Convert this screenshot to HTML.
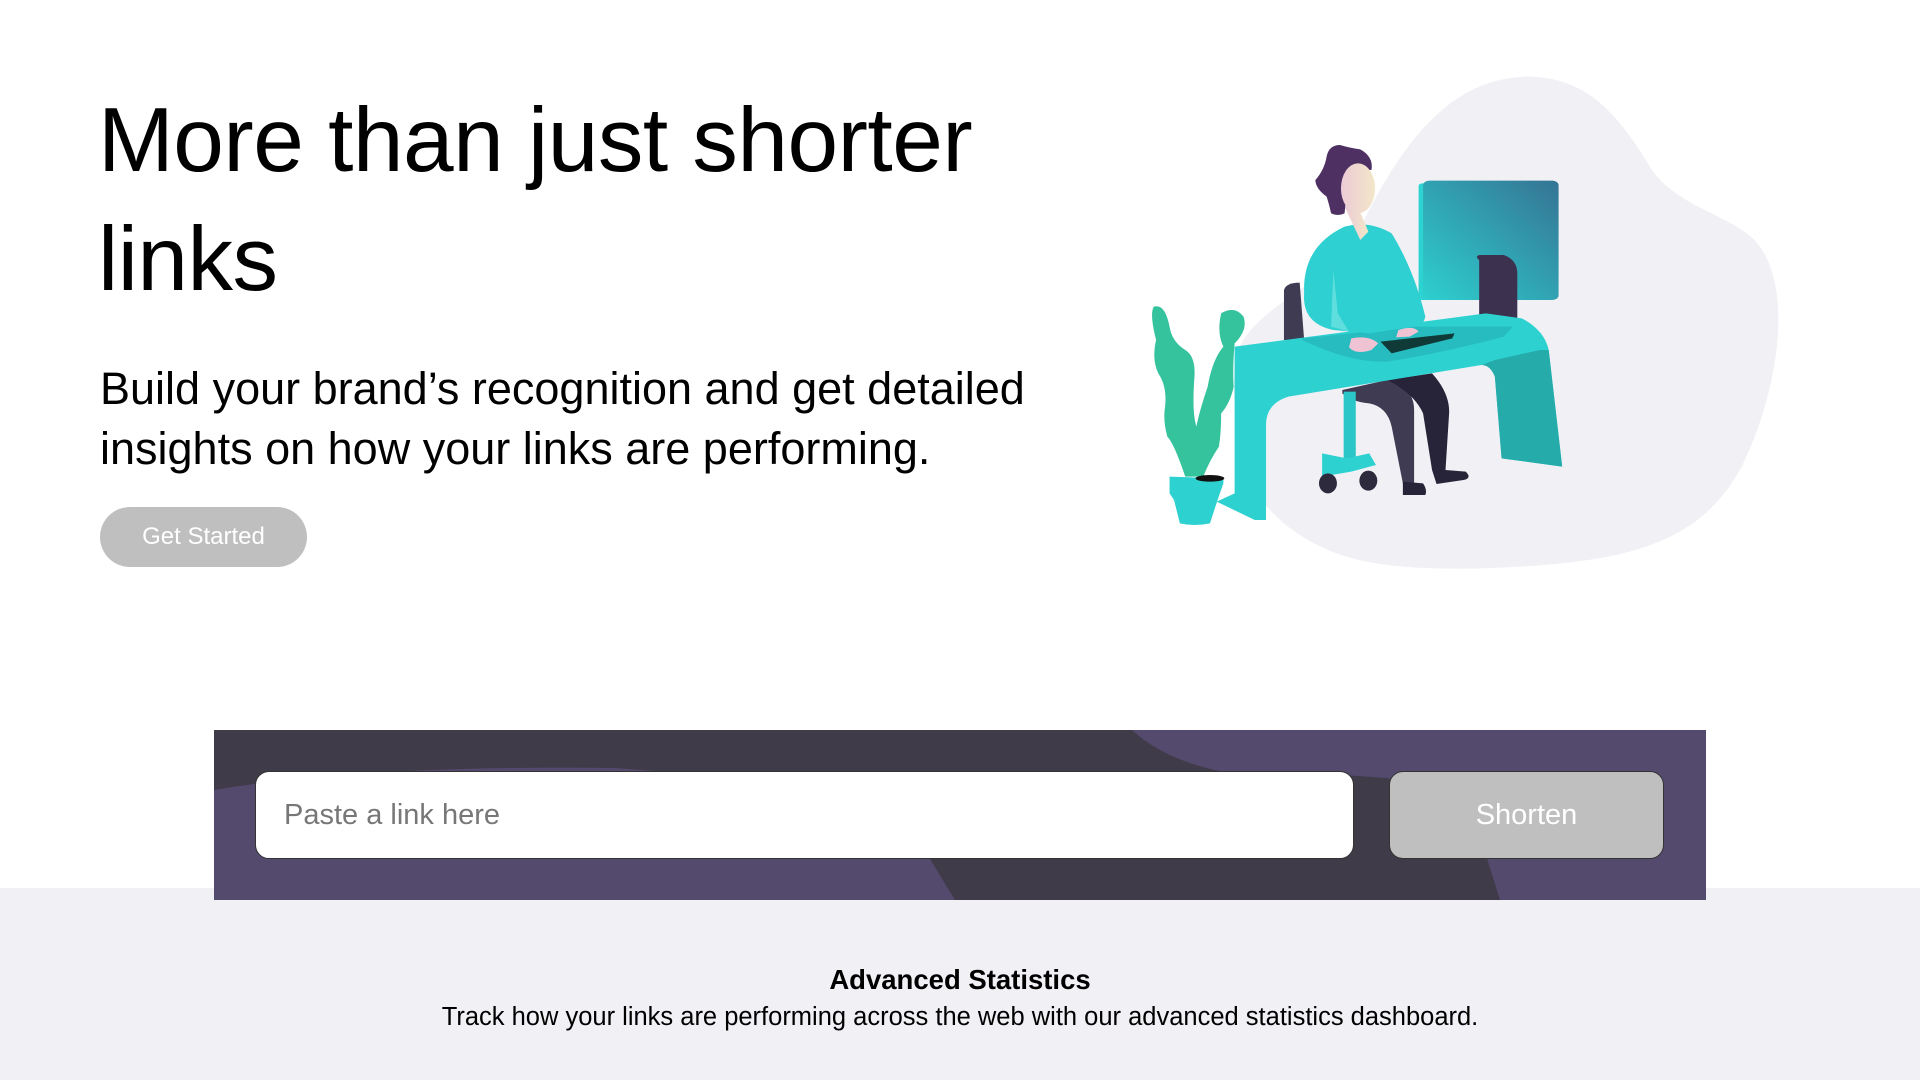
<!DOCTYPE html>
<html><head><meta charset="utf-8"><style>
*{margin:0;padding:0;box-sizing:border-box}
body{width:1920px;height:1080px;overflow:hidden;background:#fff;font-family:"Liberation Sans",sans-serif;position:relative}
h1{position:absolute;left:98px;top:81px;font-size:91px;line-height:119px;font-weight:normal;color:#000;letter-spacing:-0.5px;width:1000px}
p.lead{position:absolute;left:100px;top:359px;font-size:45px;line-height:60px;color:#000;width:1000px}
.btn{position:absolute;left:100px;top:507px;width:207px;height:60px;border-radius:30px;background:#bfbfbf;color:#fff;font-size:24px;line-height:60px;text-align:center}
.gray{position:absolute;left:0;top:888px;width:1920px;height:192px;background:#f0f0f5}
.band{position:absolute;left:214px;top:730px;width:1492px;height:170px;background:#3f3b48;overflow:hidden}
.input{position:absolute;left:255px;top:771px;width:1099px;height:88px;background:#fff;border-radius:14px;border:1px solid #333;font-size:29px;color:#777;line-height:86px;padding-left:28px}
.shorten{position:absolute;left:1389px;top:771px;width:275px;height:88px;background:#bfbfbf;border-radius:14px;border:1px solid #333;font-size:29px;color:#fff;line-height:86px;text-align:center}
.t1{position:absolute;top:964px;width:1920px;text-align:center;font-size:27.5px;font-weight:bold;color:#000}
.t2{position:absolute;top:1003px;width:1920px;text-align:center;font-size:25.5px;color:#000}
</style></head><body>
<h1>More than just shorter links</h1>
<p class="lead">Build your brand’s recognition and get detailed insights on how your links are performing.</p>
<div class="btn">Get Started</div>
<svg style="position:absolute;left:1100px;top:60px" width="700" height="520" viewBox="0 0 1560 1560" preserveAspectRatio="none">
<defs>
<linearGradient id="mon" x1="0" y1="1" x2="1" y2="0"><stop offset="0" stop-color="#2dd0cf"/><stop offset="1" stop-color="#357494"/></linearGradient>
<linearGradient id="face" x1="0" x2="1"><stop offset="0" stop-color="#eccbd6"/><stop offset="1" stop-color="#f3e6c8"/></linearGradient>
</defs>
<path d="M950 50C1080 50 1150 150 1230 330C1300 460 1440 470 1480 580C1540 720 1510 1000 1430 1220C1330 1470 1150 1510 850 1525C650 1530 540 1510 440 1420C340 1330 290 1200 300 900C330 750 470 700 560 560C650 300 760 55 950 50Z" fill="#f0f0f5"/>
<rect x="710" y="370" width="30" height="350" rx="8" fill="#2dd3d0"/>
<rect x="720" y="362" width="302" height="358" rx="14" fill="url(#mon)"/>
<path d="M845 585H900Q930 600 930 640V820L850 830Q840 822 845 810V600Q835 590 845 585Z" fill="#3d3150"/>
<path d="M410 690Q415 668 445 668L455 840L410 840Z" fill="#3f3b52"/>
<path d="M540 990L640 960Q700 980 700 1050L700 1270L675 1270L650 1100Q640 1040 600 1030Q560 1025 540 1000Z" fill="#3f3b52"/>
<path d="M640 960L740 940Q780 1000 778 1060L770 1230L815 1235Q830 1255 810 1260L750 1272L740 1230L720 1060Q700 1000 640 960Z" fill="#272439"/>
<path d="M675 1265L720 1270Q730 1290 725 1305L675 1305Z" fill="#272439"/>
<rect x="543" y="995" width="27" height="200" fill="#2bc6c8"/>
<path d="M495 1180L550 1195L600 1180L615 1215L560 1235L495 1250Z" fill="#2dd2d0"/>
<ellipse cx="508" cy="1270" rx="20" ry="30" fill="#2d2a3e"/><ellipse cx="598" cy="1262" rx="20" ry="30" fill="#2d2a3e"/>
<path d="M300 860L860 760L940 775Q990 810 1000 870L1030 1220L895 1195L880 950Q870 915 850 915L420 1010Q372 1030 370 1090L370 1380L345 1380L260 1325L300 1300Z" fill="#2dd2d0"/>
<path d="M1000 870L1030 1220L895 1195L880 950Q870 915 850 915L880 900L980 870Z" fill="#24abaa"/>
<path d="M450 840Q560 910 640 905Q760 880 900 830L920 800L700 800L560 820L450 835Z" fill="#27bcc0"/>
<path d="M545 500Q600 480 650 520Q700 630 725 770Q720 800 700 800L600 820L560 815L520 810Q450 790 455 700Q450 560 545 500Z" fill="#2ed0d1"/>
<path d="M520 630L530 760L555 815L515 800Z" fill="#5fdede"/>
<path d="M625 845L790 820L785 835L650 880Z" fill="#103a38"/>
<path d="M560 835Q600 825 620 850L605 870Q570 885 555 862Z" fill="#efc3d3"/>
<path d="M665 810Q700 795 710 815L690 830L660 832Z" fill="#efc3d3"/>
<path d="M545 440L580 540L598 515L575 440Z" fill="url(#face)"/>
<path d="M480 360Q500 330 505 290Q510 255 535 255Q560 265 580 268Q610 290 605 330L555 330L545 460Q530 470 515 460Q510 430 505 410Q480 385 480 360Z" fill="#4e3162"/>
<ellipse cx="575" cy="385" rx="38" ry="75" fill="url(#face)"/>
<path d="M120 740Q145 730 155 800Q160 845 190 870Q215 890 210 960Q205 1060 215 1100Q220 1060 240 980Q250 900 275 860Q260 820 270 760Q300 735 320 770Q330 810 300 850Q295 930 298 980Q290 1030 270 1060Q270 1120 265 1160Q245 1200 230 1250L190 1250Q165 1150 150 1130Q140 1080 145 1040Q150 980 130 940Q115 900 125 840Q110 760 120 740Z" fill="#34c39c"/>
<path d="M155 1250L275 1255L275 1270L262 1320L245 1390Q210 1400 178 1390L165 1320L155 1300Z" fill="#2dd2d0"/>
<ellipse cx="245" cy="1255" rx="32" ry="10" fill="#111"/>
</svg>
<div class="gray"></div>
<div class="band">
<svg width="1492" height="170" style="position:absolute;left:0;top:0">
<path d="M918 0H1492V170H1286L1272 125L1250 55Q1100 40 1010 42Q950 30 918 0Z" fill="#544a6e"/>
<path d="M0 60Q150 35 400 38L700 60L716 129L741 170H0Z" fill="#544a6e"/>
</svg>
</div>
<div class="input">Paste a link here</div>
<div class="shorten">Shorten</div>
<div class="t1">Advanced Statistics</div>
<div class="t2">Track how your links are performing across the web with our advanced statistics dashboard.</div>
</body></html>
